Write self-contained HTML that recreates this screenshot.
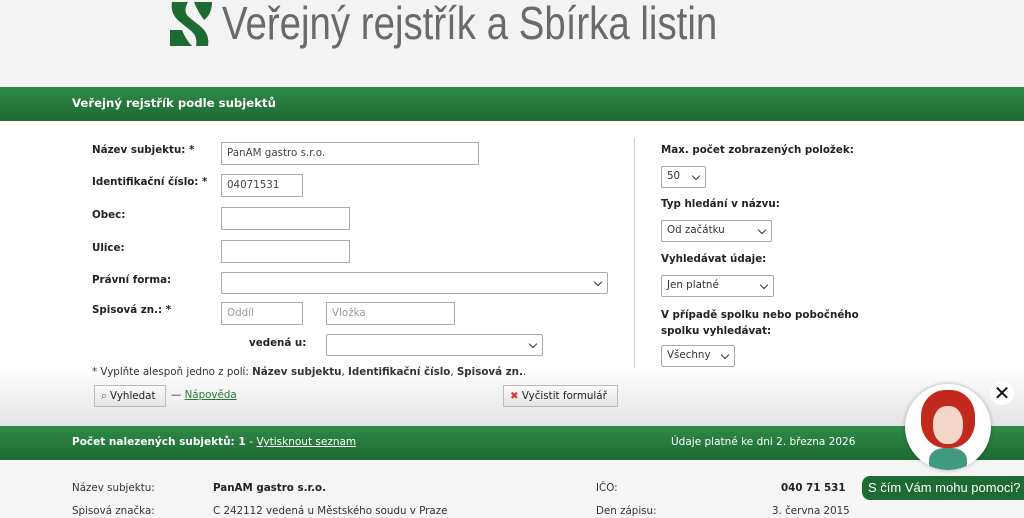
<!DOCTYPE html>
<html><head><meta charset="utf-8"><style>
*{box-sizing:border-box;margin:0;padding:0}
body{width:1024px;height:518px;overflow:hidden;background:#f3f3f3;font-family:"DejaVu Sans","Liberation Sans",sans-serif;font-size:10.3px;color:#222;position:relative}
.a{position:absolute;white-space:nowrap}
.bar{position:absolute;left:0;width:1024px;height:34px;background:linear-gradient(#2f8a48,#1d6a32);color:#fff;font-weight:bold;font-size:10.5px}
.lbl{position:absolute;font-weight:bold;color:#222;white-space:nowrap}
.inp{position:absolute;height:23px;border:1px solid #aaa;background:#fff;color:#444;padding:4px 5px}
.sel{position:absolute;height:22px;border:1px solid #aaa;background:#fff;color:#333;padding:3px 5px;border-radius:2px}
.sel:after{content:"";position:absolute;right:6px;top:6px;width:5px;height:5px;border-right:1.5px solid #333;border-bottom:1.5px solid #333;transform:rotate(45deg)}
.btn{position:absolute;height:22px;border:1px solid #bbb;background:linear-gradient(#fafafa,#e4e4e4);padding:4px 6px;color:#222;white-space:nowrap}
</style></head><body>
<svg class="a" style="left:168px;top:0" width="46" height="48" viewBox="0 0 46 48"><path d="M4 2 L20 2 Q14 12 22 18 L32 26 Q42 34 40 46 L28 46 Q30 36 22 30 L12 22 Q2 14 4 2Z" fill="#1d6a32"/><path d="M26 2 L44 2 Q44 14 36 20 Q30 12 26 2Z" fill="#1d6a32"/><path d="M2 30 L14 30 Q18 40 24 46 L2 46Z" fill="#1d6a32"/></svg>
<div class="a" style="left:222px;top:-4px;font-family:'Liberation Sans',sans-serif;font-size:46px;color:#6a6a6a;transform:scaleX(0.835);transform-origin:left">Veřejný rejstřík a Sbírka listin</div>
<div class="bar" style="top:87px;font-size:11.7px"><span class="a" style="left:72px;top:9px">Veřejný rejstřík podle subjektů</span></div>
<div class="a" style="left:0;top:121px;width:1024px;height:305px;background:linear-gradient(#fff 0,#fff 245px,#e4e4e4 305px)"></div>
<div class="a" style="left:634px;top:138px;width:1px;height:230px;background:#ccc"></div>
<div class="lbl" style="left:92px;top:144px">Název subjektu: *</div>
<div class="inp" style="left:221px;top:142px;width:258px">PanAM gastro s.r.o.</div>
<div class="lbl" style="left:92px;top:176px">Identifikační číslo: *</div>
<div class="inp" style="left:221px;top:174px;width:82px">04071531</div>
<div class="lbl" style="left:92px;top:209px">Obec:</div>
<div class="inp" style="left:221px;top:207px;width:129px"></div>
<div class="lbl" style="left:92px;top:242px">Ulice:</div>
<div class="inp" style="left:221px;top:240px;width:129px"></div>
<div class="lbl" style="left:92px;top:274px">Právní forma:</div>
<div class="sel" style="left:221px;top:272px;width:387px"></div>
<div class="lbl" style="left:92px;top:304px">Spisová zn.: *</div>
<div class="inp" style="left:221px;top:302px;width:82px;color:#999">Oddíl</div>
<div class="inp" style="left:326px;top:302px;width:129px;color:#999">Vložka</div>
<div class="lbl" style="left:249px;top:337px">vedená u:</div>
<div class="sel" style="left:326px;top:334px;width:217px"></div>
<div class="a" style="left:92px;top:366px;color:#333">* Vyplňte alespoň jedno z polí: <b>Název subjektu</b>, <b>Identifikační číslo</b>, <b>Spisová zn.</b>.</div>
<div class="btn" style="left:94px;top:385px;width:72px"><span style="color:#666">&#x2315;</span> Vyhledat</div>
<div class="a" style="left:171px;top:389px;color:#333">— <u style="color:#2a7a3a">Nápověda</u></div>
<div class="btn" style="left:503px;top:385px;width:115px"><span style="color:#d33;font-weight:bold">✖</span> Vyčistit formulář</div>
<div class="lbl" style="left:661px;top:144px">Max. počet zobrazených položek:</div>
<div class="sel" style="left:661px;top:166px;width:45px">50</div>
<div class="lbl" style="left:661px;top:198px">Typ hledání v názvu:</div>
<div class="sel" style="left:661px;top:220px;width:111px">Od začátku</div>
<div class="lbl" style="left:661px;top:253px">Vyhledávat údaje:</div>
<div class="sel" style="left:661px;top:275px;width:113px">Jen platné</div>
<div class="lbl" style="left:661px;top:307px;line-height:16px">V případě spolku nebo pobočného<br>spolku vyhledávat:</div>
<div class="sel" style="left:661px;top:345px;width:74px">Všechny</div>
<div class="bar" style="top:426px"><span class="a" style="left:72px;top:10px">Počet nalezených subjektů: 1 <span style="font-weight:normal">- <u>Vytisknout seznam</u></span></span><span class="a" style="left:671px;top:10px;font-weight:normal">Údaje platné ke dni 2. března 2026</span></div>
<div class="a" style="left:0;top:460px;width:1024px;height:58px;background:#f5f5f5"></div>
<div class="a" style="left:72px;top:482px;color:#333">Název subjektu:</div>
<div class="a" style="left:213px;top:482px;font-weight:bold">PanAM gastro s.r.o.</div>
<div class="a" style="left:596px;top:482px;color:#333">IČO:</div>
<div class="a" style="left:781px;top:482px;font-weight:bold">040 71 531</div>
<div class="a" style="left:72px;top:505px;color:#333">Spisová značka:</div>
<div class="a" style="left:213px;top:505px;color:#333">C 242112 vedená u Městského soudu v Praze</div>
<div class="a" style="left:596px;top:505px;color:#333">Den zápisu:</div>
<div class="a" style="left:772px;top:505px;color:#333">3. června 2015</div>
<div class="a" style="left:905px;top:384px;width:86px;height:86px;border-radius:50%;background:#fff;box-shadow:0 0 4px rgba(0,0,0,.3);overflow:hidden">
<div class="a" style="left:16px;top:6px;width:54px;height:58px;border-radius:45%;background:#c2281c"></div>
<div class="a" style="left:28px;top:22px;width:30px;height:38px;border-radius:45%;background:#f3d6c8"></div>
<div class="a" style="left:24px;top:64px;width:38px;height:30px;border-radius:40% 40% 0 0;background:#3f9a80"></div>
</div>
<div class="a" style="left:990px;top:381px;width:24px;height:24px;border-radius:50%;background:#fff;font-size:20px;line-height:24px;text-align:center;color:#111">✕</div>
<div class="a" style="left:862px;top:476px;width:170px;height:24px;border-radius:8px;background:#1d6a32;color:#fff;font-family:'Liberation Sans',sans-serif;font-size:13px;padding:4px 6px">S čím Vám mohu pomoci?</div>
</body></html>
